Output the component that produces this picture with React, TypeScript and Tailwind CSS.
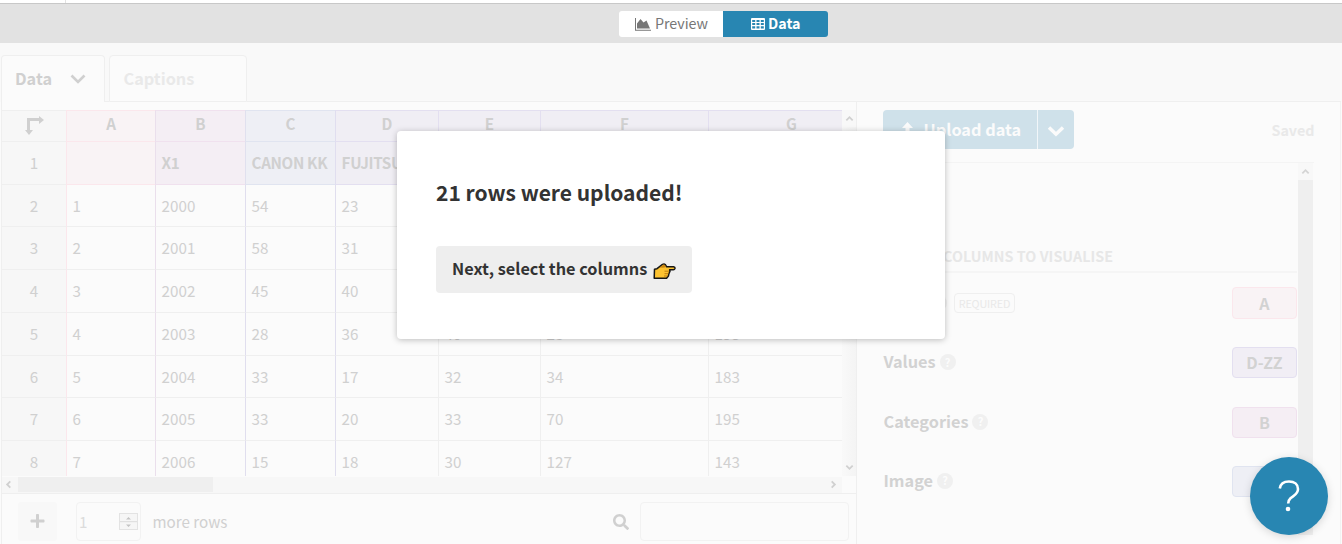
import React from "react";
import { FaPlus, FaSearch } from "react-icons/fa";

const headers = [
  { letter: "A", title: "", cls: "bg-[#f9f3f5] border-l-[#fbe7ec] border-b-[#fbe7ec]", top: "border-t-[#fbe7ec]" },
  { letter: "B", title: "X1", cls: "bg-[#f4eef4] border-l-[#eadfec] border-b-[#f0e1ee]", top: "border-t-[#f0e1ee]" },
  { letter: "C", title: "CANON KK", cls: "bg-[#eeeff5] border-l-[#e0e0ee] border-b-[#e0e4f0]", top: "border-t-[#e0e4f0]" },
  { letter: "D", title: "FUJITSU", cls: "bg-[#f0eef4] border-l-[#e0deef] border-b-[#e3dff0]", top: "border-t-[#e3dff0]" },
  { letter: "E", title: "", cls: "bg-[#f0eef4] border-l-[#e3dff0] border-b-[#e3dff0]", top: "border-t-[#e3dff0]" },
  { letter: "F", title: "", cls: "bg-[#f0eef4] border-l-[#e3dff0] border-b-[#e3dff0]", top: "border-t-[#e3dff0]" },
  { letter: "G", title: "", cls: "bg-[#f0eef4] border-l-[#e3dff0] border-b-[#e3dff0]", top: "border-t-[#e3dff0]" },
];

const cellBorders = [
  "border-l-[#fbe7ec]",
  "border-l-[#eadfec]",
  "border-l-[#e0deee]",
  "border-l-[#e0deee]",
  "border-l-[#efefef]",
  "border-l-[#efefef]",
  "border-l-[#efefef]",
];

const rows = [
  { n: 2, h: "h-[42px]", v: ["1", "2000", "54", "23", "", "", ""] },
  { n: 3, h: "h-[43px]", v: ["2", "2001", "58", "31", "", "", ""] },
  { n: 4, h: "h-[43px]", v: ["3", "2002", "45", "40", "", "", ""] },
  { n: 5, h: "h-[43px]", v: ["4", "2003", "28", "36", "40", "28", "193"] },
  { n: 6, h: "h-[42px]", v: ["5", "2004", "33", "17", "32", "34", "183"] },
  { n: 7, h: "h-[43px]", v: ["6", "2005", "33", "20", "33", "70", "195"] },
  { n: 8, h: "h-[43px]", v: ["7", "2006", "15", "18", "30", "127", "143"] },
];

const fields = [
  { name: "Values", col: "D-ZZ", cls: "bg-[#f1eef5] border-[#e3dff0]" },
  { name: "Categories", col: "B", cls: "bg-[#f5eef4] border-[#f0e1ee]" },
  { name: "Image", col: "C", cls: "bg-[#eeeff5] border-[#e0e4f0]" },
];

const gridCols = "grid grid-cols-[64px_89px_90px_90px_103px_102px_168px_134px]";

function Chevron({ d, className }: { d: string; className: string }) {
  return (
    <svg viewBox="0 0 10 10" className={className} fill="none" stroke="currentColor" strokeWidth="2">
      <path d={d} />
    </svg>
  );
}

function AreaChartIcon() {
  return (
    <svg width="16" height="13" viewBox="0 0 16 13" fill="currentColor">
      <path d="M0 0h1v11.700h15v1H0z" />
      <path d="M2 10.500V5.500L5.500 1 8.500 4.500 11.500 2.500 15 10.500z" />
    </svg>
  );
}

function TableIcon() {
  return (
    <svg width="14" height="12" viewBox="0 0 14 12" fill="currentColor">
      <path
        fillRule="evenodd"
        d="M1 0h12a1 1 0 0 1 1 1v10a1 1 0 0 1-1 1H1a1 1 0 0 1-1-1V1a1 1 0 0 1 1-1zM1.200 2v2h3V2zM5.500 2v2h3V2zM9.800 2v2h3V2zM1.200 5.100v2h3v-2zM5.500 5.100v2h3v-2zM9.800 5.100v2h3v-2zM1.200 8.300v2.300h3V8.300zM5.500 8.300v2.300h3V8.300zM9.800 8.300v2.300h3V8.300z"
      />
    </svg>
  );
}

function TopBar() {
  return (
    <>
      <div className="h-[3px] bg-white flex-none">
        <div className="h-[3px] w-[66px] border-r border-[#e2e2e2]" />
      </div>
      <div className="h-10 flex-none bg-[#e2e2e2] border-t border-[#c8c8c8] flex pl-[619px] pt-[7px]">
        <div className="w-[104px] h-[26px] bg-white rounded-l-[3px] flex items-center pl-4 gap-1 text-[#777] text-[14.3px]">
          <AreaChartIcon />
          <span className="pb-[2px] tracking-[-0.05px]">Preview</span>
        </div>
        <div className="w-[105px] h-[26px] bg-[#2886b2] rounded-r-[3px] flex items-center pl-7 gap-[3px] text-white text-[14.3px] font-bold">
          <TableIcon />
          <span className="pb-[2px]">Data</span>
        </div>
      </div>
    </>
  );
}

function Tabs() {
  return (
    <div className="h-[59px] pt-3 flex flex-none text-[16.3px] font-bold">
      <div className="ml-px w-[104px] h-[47px] border border-b-0 border-[#efefef] rounded-t-[4px] bg-[#fbfbfb] flex items-center pl-[13px]">
        <span className="w-[55px] pb-[2px] text-[#d0d0d0]">Data</span>
        <svg className="w-4 h-4" viewBox="0 0 16 16" fill="none" stroke="#d0d0d0" strokeWidth="2.600">
          <path d="M1.500 4.500 8 11l6.500-6.500" />
        </svg>
      </div>
      <div className="w-1 border-b border-[#efefef]" />
      <div className="w-[138px] border border-[#efefef] rounded-t-[4px] bg-[#fbfbfb] text-[#e9e9e9] flex items-center pl-[13.5px]">Captions</div>
      <div className="w-[1094px] border-b border-[#efefef]" />
    </div>
  );
}

function Sheet() {
  return (
    <div className="w-[840px] h-[366px] overflow-hidden text-[#d0d0d0] text-[15.2px] flex-none">
      <div className={gridCols + " h-8 font-bold text-center leading-[25px]"}>
        <div className="bg-[#f7f7f7] border-y border-[#efefef] pl-[23px] pt-[5px]">
          <svg width="20" height="20" viewBox="0 0 20 20" fill="currentColor">
            <path d="M2 2H14V0l5 4-5 4V5H5v9h3l-4 5-4-5h2z" />
          </svg>
        </div>
        {headers.map((h) => (
          <div key={h.letter} className={"border-l border-y " + h.cls + " " + h.top}>
            {h.letter === "G" ? <span className="pl-8">G</span> : h.letter}
          </div>
        ))}
      </div>
      <div className={gridCols + " h-[43px] font-bold leading-[40px]"}>
        <div className="bg-[#f7f7f7] border-b border-[#efefef] text-center font-normal">1</div>
        {headers.map((h) => (
          <div key={h.letter} className={"border-l border-b pl-[5.6px] overflow-hidden whitespace-nowrap tracking-[-0.35px] " + h.cls}>
            {h.title}
          </div>
        ))}
      </div>
      {rows.map((r) => (
        <div key={r.n} className={gridCols + " leading-[40px] " + r.h}>
          <div className="bg-[#f7f7f7] border-b border-[#efefef] text-center">{r.n}</div>
          {r.v.map((v, i) => (
            <div key={i} className={"border-l border-b border-b-[#efefef] pl-[5.6px] " + cellBorders[i]}>
              {v}
            </div>
          ))}
        </div>
      ))}
    </div>
  );
}

function LeftPanel() {
  return (
    <div className="ml-px w-[856px] border-x border-[#efefef] flex flex-col flex-none pt-2">
      <div className="flex">
        <Sheet />
        <div className="w-[14px] flex flex-col justify-between items-center bg-gradient-to-r from-[#f9f9f9] to-[#f4f4f4] text-[#d0d0d0] flex-none">
          <div className="h-[17px] w-full bg-[#f8f8f8] flex items-center justify-center">
            <Chevron className="w-[9px] h-[9px]" d="M1.500 7 5 3.500 8.500 7" />
          </div>
          <div className="h-[17px] flex items-center">
            <Chevron className="w-[9px] h-[9px]" d="M1.500 3 5 6.500 8.500 3" />
          </div>
        </div>
      </div>
      <div className="h-[18px] pt-px border-b border-[#efefef] flex flex-none">
        <div className="w-[840px] bg-[#f7f7f7] flex items-center text-[#d0d0d0]">
          <div className="w-4 flex pl-[2px] pb-px">
            <Chevron className="w-[9px] h-[9px]" d="M7 1.500 3.500 5 7 8.500" />
          </div>
          <div className="w-[195px] h-[15px] bg-[#efefef] mb-px" />
          <div className="flex-1 flex justify-end pr-1 pb-px">
            <Chevron className="w-[9px] h-[9px]" d="M3 1.500 6.500 5 3 8.500" />
          </div>
        </div>
      </div>
      <div className="flex pt-2 pl-4 items-start text-[#d0d0d0] text-[15.2px]">
        <div className="w-[39px] h-[39px] rounded-[3px] bg-[#f8f8f8] flex items-center justify-center pr-px pb-px">
          <FaPlus className="w-[15px] h-[16px]" />
        </div>
        <div className="ml-[19px] w-[65px] h-[39px] border border-[#f2f2f2] rounded-[4px] flex items-center justify-between pl-[2px] pr-[2px] text-[#dcdcdc]">
          <span>1</span>
          <div className="w-[19px] h-[17px] border border-[#e3e3e3] bg-[#f6f6f6] text-[#c4c4c4] flex flex-col">
            <svg viewBox="0 0 17 15" className="w-[17px] h-[15px]" fill="currentColor">
              <path d="M6 5.500h5L8.500 3zM6 10.500h5L8.500 13z" />
              <path d="M0 7h17v1.200H0z" fill="#e0e0e0" />
            </svg>
          </div>
        </div>
        <span className="ml-[11.5px] leading-[39px] w-[460.5px]">more rows</span>
        <FaSearch className="w-4 h-4 mt-[12px]" />
        <div className="ml-[11px] w-[209px] h-[39px] border border-[#f2f2f2] rounded-[4px]" />
      </div>
    </div>
  );
}

function Help() {
  return (
    <span className="w-4 h-4 mb-[1px] rounded-full bg-[#f0f0f0] text-[#fcfcfc] text-[11px] font-bold flex items-center justify-center leading-none">?</span>
  );
}

function RightPanel() {
  return (
    <div className="w-[484px] border-r border-[#f2f2f2] pl-[26px] pt-2 flex flex-col text-[#d2d2d2]">
      <div className="flex h-[53px] w-[431px] justify-between border-b border-[#f4f4f4] flex-none">
        <div className="flex h-[39px] text-white font-bold text-[16.3px]">
          <div className="w-[154px] bg-[#cfe1ea] rounded-l-[4px] flex items-center pl-[18px] text-[#fbfbfb]">
            <svg width="13" height="18" viewBox="0 0 13 18" fill="currentColor">
              <path d="M6.500 1 12 7H8.500v7h-4V7H1z" />
            </svg>
            <span className="ml-[9.6px]">Upload data</span>
          </div>
          <div className="w-[37px] border-l border-[#f1f6f9] bg-[#cfe1ea] rounded-r-[4px] flex items-center justify-center">
            <svg width="18" height="18" viewBox="0 0 18 18" fill="none" stroke="#fbfbfb" strokeWidth="3.500">
              <path d="M2 6.500 9 13.200l7-6.700" />
            </svg>
          </div>
        </div>
        <span className="text-[#e9e9e9] font-bold text-[14.3px] leading-[40px] -mr-[0.5px]">Saved</span>
      </div>
      <div className="flex w-[431px] flex-1">
        <div className="w-[415px] pr-px flex flex-col">
          <div className="h-[110px] flex items-end border-b-2 border-[#f5f5f5] pb-[5px] flex-none">
            <span className="pl-[60px] text-[#e7e7e7] font-bold text-[14.3px] leading-5 tracking-[0.06px]">COLUMNS TO VISUALISE</span>
          </div>
          <div className="flex h-[60px] items-center justify-between flex-none">
            <div className="flex items-center pl-[48px] gap-[7px]">
              <Help />
              <span className="w-[61px] h-5 border border-[#efefef] rounded-[4px] text-[#e9e9e9] text-[10.8px] leading-[18px] text-center tracking-[-0.15px]">REQUIRED</span>
            </div>
            <span className="w-[65px] h-8 border rounded-[4px] text-center font-bold text-[16px] leading-[30px] bg-[#f9f3f5] border-[#fbe7ec]">A</span>
          </div>
          {fields.map((f) => (
            <div key={f.name} className="flex h-[59.4px] items-center justify-between flex-none font-bold text-[16.3px]">
              <div className="flex items-center gap-[4px] pl-[0.5px]">
                <span className="pb-[2px]">{f.name}</span>
                <Help />
              </div>
              <span className={"w-[65px] h-[31px] border rounded-[4px] text-center text-[16px] leading-[29px] " + f.cls}>{f.col}</span>
            </div>
          ))}
        </div>
        <div className="w-[15px] h-[372px] bg-[#efefef]">
          <div className="h-[17px] bg-[#f8f8f8] flex items-center justify-center text-[#d4d4d4]">
            <Chevron className="w-[9px] h-[9px]" d="M1.500 7 5 3.500 8.500 7" />
          </div>
        </div>
      </div>
    </div>
  );
}

function PointingHand() {
  return (
    <svg width="23" height="17" viewBox="0 0 23 17" className="mt-[4px]">
      <path
        d="M1.500 6.200 4 5.700 9.500 1.400Q11.200.6 12.200 1.500L13.700 3.800H20.500Q22.200 4.200 22 5.400 21.700 6.700 20.400 6.700H16.600L17 8.200 15.900 10.700 15.400 13 13.600 15.200H1.200z"
        fill="#fdc331"
        stroke="#161616"
        strokeWidth="1.500"
        strokeLinejoin="round"
      />
      <path d="M6.500 4.500 9.700 1.900Q11.200 1.200 12 2.200L12.900 4.200 9.500 4.800z" fill="#c98610" />
      <path d="M11.500 8.200h4.500M11.500 10.700h4M11 13h3.500" stroke="#b8770e" strokeWidth=".9" />
    </svg>
  );
}

function Modal() {
  return (
    <div className="absolute left-[397px] top-[131px] w-[548px] h-[208px] bg-white rounded-[4px] shadow-[0_1px_6px_rgba(0,0,0,0.25)] text-[#333] font-bold pl-[39px] pt-[45px] flex flex-col items-start">
      <h2 className="text-[21px] leading-8">21 rows were uploaded!</h2>
      <button className="mt-[38px] w-[256px] h-[47px] rounded-[4px] bg-[#eee] flex items-center pl-4 gap-[6px] text-[16.3px] whitespace-nowrap">
        <span className="pb-[2px]">Next, select the columns</span>
        <PointingHand />
      </button>
    </div>
  );
}

export default function App() {
  return (
    <div className="relative w-[1342px] h-[544px] overflow-hidden flex flex-col bg-[#f9f9f9] font-['Noto_Sans_CJK_SC',sans-serif]">
      <TopBar />
      <Tabs />
      <div className="flex h-[442px] bg-[#fbfbfb]">
        <LeftPanel />
        <RightPanel />
      </div>
      <Modal />
      <div className="absolute left-[1250px] top-[457px] w-[78px] h-[78px] rounded-full bg-[#2886b2] shadow-[0_2px_8px_rgba(0,0,0,0.15)] flex items-center justify-center">
        <svg width="24" height="34" viewBox="0 0 24 34" fill="none" stroke="white" strokeWidth="2.600">
          <path d="M2.800 9.500C3.500 4.500 7.300 2.500 12 2.500c5.500 0 9 3 9 7.500 0 5.500-4.500 6.500-7.500 9.200-1.900 1.700-2.300 3-2.300 5.300" />
          <circle cx="11" cy="30" r="2.300" fill="white" stroke="none" />
        </svg>
      </div>
    </div>
  );
}
